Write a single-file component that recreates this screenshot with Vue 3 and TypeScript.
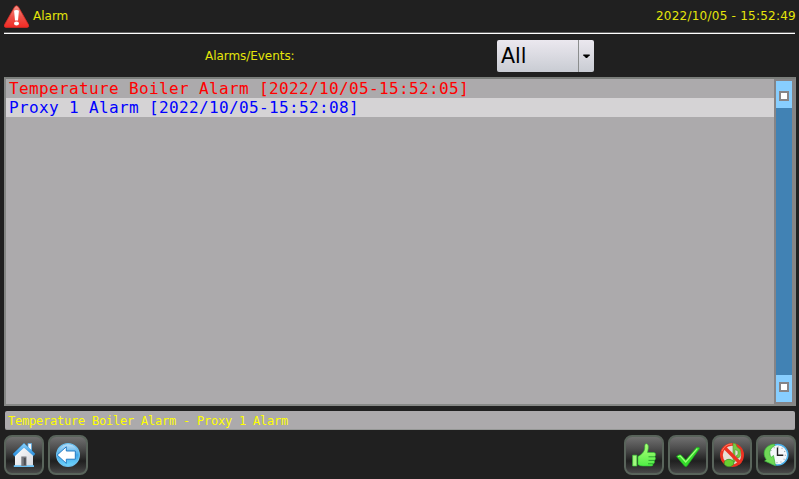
<script setup lang="ts">
import { ref } from 'vue'

interface AlarmRow { text: string; tone: 'active' | 'info' }

const timestamp = ref('2022/10/05 - 15:52:49')
const filter = ref('All')
const rows = ref<AlarmRow[]>([
  { text: 'Temperature Boiler Alarm [2022/10/05-15:52:05]', tone: 'active' },
  { text: 'Proxy 1 Alarm [2022/10/05-15:52:08]', tone: 'info' },
])
const summary = ref('Temperature Boiler Alarm - Proxy 1 Alarm')
</script>

<template>
  <main class="screen">
    <header class="header">
      <svg class="warn" viewBox="0 0 26 24">
        <defs>
          <linearGradient id="warnFill" x1="0" y1="0" x2="0" y2="1">
            <stop offset="0" stop-color="#f89488" /><stop offset=".5" stop-color="#ed5148" /><stop offset="1" stop-color="#f22b25" />
          </linearGradient>
        </defs>
        <path d="M12.5 .8Q13.9 .8 14.9 2.7L24.4 19.6Q25.6 22.4 23 22.4H2Q-.6 22.4.6 19.6L10.1 2.7Q11.1 .8 12.5 .8Z" fill="url(#warnFill)" stroke="#d92b25" stroke-width=".8" />
        <path d="M10.1 6Q10.1 5 12.5 5T14.9 6L14 15.5H11Z" fill="#fff" />
        <ellipse cx="12.5" cy="18.6" rx="2.5" ry="2" fill="#fff" />
      </svg>
      <h1 class="title">Alarm</h1>
      <time class="clock">{{ timestamp }}</time>
    </header>

    <section class="filter">
      <span class="label">Alarms/Events:</span>
      <button class="combo" type="button">
        <span class="value">{{ filter }}</span>
        <span class="drop"><svg viewBox="0 0 8 5"><path d="M0 .5H8V1.5L4.7 5H3.3L0 1.5Z" /></svg></span>
      </button>
    </section>

    <section class="list">
      <ul class="rows">
        <li v-for="row in rows" :key="row.text" :class="row.tone">{{ row.text }}</li>
      </ul>
      <div class="scroll">
        <span class="cap"><i /></span>
        <span class="cap"><i /></span>
      </div>
    </section>

    <div class="summary">{{ summary }}</div>

    <footer class="toolbar">
      <button class="tool" type="button">
        <svg viewBox="0 0 40 40">
          <defs>
            <linearGradient id="roof" x1="0" y1="0" x2="0" y2="1"><stop offset="0" stop-color="#8fd6ff" /><stop offset="1" stop-color="#2087da" /></linearGradient>
            <linearGradient id="wall" x1="0" y1="0" x2="1" y2="1"><stop offset="0" stop-color="#fff" /><stop offset="1" stop-color="#d5d7de" /></linearGradient>
          </defs>
          <path d="M24 8.5H27.5V16H24Z" fill="#f3f6fa" stroke="#59aee8" stroke-width=".8" />
          <path d="M11 19L20 11L29 19V31.5H11Z" fill="url(#wall)" />
          <path d="M9.8 30.2H30V32H9.8Z" fill="#6dc0f3" />
          <path d="M17.3 21.5H22.5V31H17.3Z" fill="#77797f" />
          <path d="M19.8 23H21.8V30H19.8Z" fill="#4d4f54" />
          <path d="M20 8.2L31 18.8L29.5 20.8L20 12.3L10.5 21.3L9 19Z" fill="url(#roof)" stroke="#2c97e0" stroke-width=".5" />
        </svg>
      </button>
      <button class="tool" type="button">
        <svg viewBox="0 0 40 40">
          <defs><linearGradient id="blue" x1="0" y1="0" x2="0" y2="1"><stop offset="0" stop-color="#c1e2f7" /><stop offset=".5" stop-color="#40a5e7" /><stop offset="1" stop-color="#70d8ff" /></linearGradient></defs>
          <circle cx="20" cy="20" r="11.3" fill="url(#blue)" stroke="#6cc2f1" stroke-width="1.3" />
          <path d="M9.2 20L18.3 11.8V16H27.3V24.2H18.3V28.4Z" fill="#fff" stroke="#1972bd" stroke-width=".9" stroke-linejoin="round" />
        </svg>
      </button>
      <span class="spacer" />
      <button class="tool" type="button">
        <svg viewBox="0 0 40 40">
          <defs><linearGradient id="thumb" x1="0" y1="0" x2="0" y2="1"><stop offset="0" stop-color="#b4ff7b" /><stop offset="1" stop-color="#4fee45" /></linearGradient></defs>
          <path d="M8.7 20.2H12.8V31H8.7Z" fill="#a3f980" stroke="#3ed33b" stroke-width=".7" />
          <path d="M14 21.5C17.5 19.5 20.5 17 20.8 13Q20.5 8.7 22.3 8.7Q25 9.5 24.3 13.5L23.5 17.5H30Q31.8 18 31.6 19.7T30.5 21.8Q32 22.5 31.4 24.1T30 25.5Q31 27 30.2 28T28.8 29Q29.5 31 27 31H19Q16 31 14 29.5Z" fill="url(#thumb)" stroke="#2cc430" stroke-width=".6" />
          <path d="M24.5 21.8H30.5M24.5 25.4H30M24 28.8H29" stroke="#249c2b" stroke-width=".9" />
        </svg>
      </button>
      <button class="tool" type="button">
        <svg viewBox="0 0 40 40">
          <path d="M8.5 21.5Q11 18.8 13 20L17.8 25L28.5 12.5Q30.5 11.8 31.8 13.2L19 31Q17.8 32 16.5 31Z" fill="#35dc2c" stroke="#1ea91f" stroke-width=".7" stroke-linejoin="round" />
          <path d="M10 21.7L12.2 21L17.7 27L29.3 13.6" fill="none" stroke="#9dff78" stroke-width="1.2" />
        </svg>
      </button>
      <button class="tool" type="button">
        <svg viewBox="0 0 40 40">
          <circle cx="20" cy="20" r="10.6" fill="#e6ded6" stroke="#ec3222" stroke-width="2.8" />
          <path d="M21 27V8.2Q23.5 8 24 9.5Q24.5 12.5 28.3 14.5V21Q27 24 24.5 22.5Q23.5 20 26 19.5V16L23 14.5V27Z" fill="#79c943" stroke="#4a9c35" stroke-width=".6" />
          <path d="M12 12L28.5 28.5" stroke="#ec3222" stroke-width="3.4" />
          <ellipse cx="17" cy="28" rx="4.8" ry="3.7" fill="#69ce31" stroke="#39942a" stroke-width=".8" />
          <path d="M10 16Q13 9 20 9" fill="none" stroke="#ff8b6b" stroke-width=".8" />
        </svg>
      </button>
      <button class="tool" type="button">
        <svg viewBox="0 0 40 40">
          <circle cx="21.5" cy="19.8" r="10.3" fill="#f5f7fa" stroke="#4eb3ec" stroke-width="1.5" />
          <circle cx="21.5" cy="19.8" r="7.9" fill="none" stroke="#9aa2a9" stroke-width="1.2" stroke-dasharray="1 3.13" />
          <path d="M21.5 12.5V20.2H27.3" fill="none" stroke="#222" stroke-width="1.4" />
          <path d="M18 9C9 10.2 5.5 18 10.3 24.5L8.6 26L19.5 30.8L17.5 20.5L15.2 22.3C12.5 18.5 13.5 13 19 10.5Z" fill="#70d957" stroke="#39b23b" stroke-width=".7" />
        </svg>
      </button>
    </footer>
  </main>
</template>

<style>
body { margin: 0; overflow: hidden; background: #202020; }
</style>

<style scoped>
.screen { box-sizing: border-box; width: 799px; height: 479px; padding: 0 3px 0 4px; display: flex; flex-direction: column; background: #202020; color: #e5e50a; font-family: "DejaVu Sans", sans-serif; }
.header { box-sizing: border-box; height: 34px; padding-top: 5px; display: flex; align-items: flex-start; border-bottom: 1px solid #fff; box-shadow: inset 0 -1px #626262; margin-right: 1px; }
.warn { width: 26px; height: 24px; flex: none; }
.title { margin: 3px 0 0 3px; font-size: 12px; line-height: 16px; font-weight: 400; }
.clock { margin: 3px -1px 0 auto; font-size: 12px; line-height: 16px; letter-spacing: .24px; }
.filter { height: 43px; box-sizing: border-box; padding: 6px 0 0 201px; display: grid; grid-template-columns: 292px 97px; align-items: start; }
.label { margin-top: 8px; font-size: 12px; line-height: 16px; letter-spacing: -.05px; }
.combo { box-sizing: border-box; width: 97px; height: 32px; padding: 0; border: 0; border-radius: 2px; display: flex; font: inherit; color: #000; background: linear-gradient(#ebe8ef, #c9ccd3); }
.value { width: 81px; box-sizing: border-box; padding-left: 4px; text-align: left; font-size: 20.6px; line-height: 32px; }
.drop { width: 16px; height: 32px; box-sizing: border-box; border-left: 1px solid #8b8d8d; display: flex; align-items: center; justify-content: center; }
.drop svg { width: 7px; height: 4px; }
.list { box-sizing: border-box; width: 792px; height: 329px; display: flex; background: #acaaac; border: 2px solid #868886; border-top-color: #7b7e7b; border-right-width: 1px; border-left-color: #848684; }
.rows { flex: 1; margin: 0; padding: 0; list-style: none; font-family: "DejaVu Sans Mono", monospace; font-size: 16px; line-height: 19px; letter-spacing: .367px; }
.rows li { height: 19px; padding-left: 3px; white-space: pre; }
.active { color: #f00; }
.info { color: #00f; background: #d5d3d5; }
.scroll { box-sizing: border-box; width: 21px; padding: 0; border: 2px solid #868486; border-right-width: 3px; background: #4182b4; display: flex; flex-direction: column; justify-content: space-between; }
.cap { height: 27px; display: flex; align-items: center; justify-content: center; background: #87ceff; padding-top: 3px; box-sizing: border-box; }
.cap:last-child { padding: 0 0 3px; }
.cap i { width: 6px; height: 6px; background: #fff; border: 2px solid #868486; }
.summary { box-sizing: border-box; width: 790px; height: 19px; margin: 5px 0 0 1px; padding: 1px 0 0 3px; border-radius: 2px; background: #acaaac; border-bottom: 1px solid #969896; color: #ff0; font-family: "DejaVu Sans Mono", monospace; font-size: 12px; line-height: 19px; letter-spacing: -.225px; white-space: pre; }
.toolbar { display: flex; gap: 4px; margin-top: 5px; }
.spacer { flex: 1; }
.tool { box-sizing: border-box; width: 40px; height: 40px; padding: 0; border: 2px solid #59645b; border-radius: 8px; background: linear-gradient(#767676, #4c4c4c 35%, #202020 65%, #323232 80%, #515151) border-box; flex: none; }
.tool svg { display: block; width: 40px; height: 40px; margin: -2px; }
</style>
